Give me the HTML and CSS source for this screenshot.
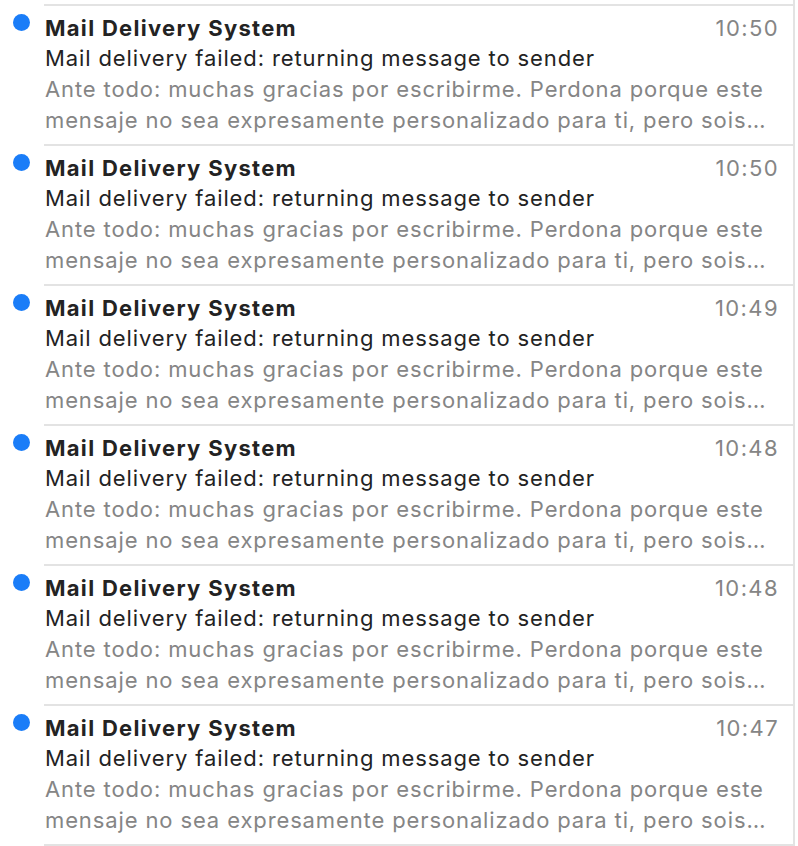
FILE: index.html
```html
<!DOCTYPE html>
<html lang="es">
<head>
<meta charset="utf-8">
<title>Mail</title>
<link rel="stylesheet" href="styles.css">
</head>
<body>
<div class="list">
  <div class="row">
    <div class="dot-col"><span class="dot"></span></div>
    <div class="content">
      <div class="head"><span class="sender">Mail Delivery System</span><span class="time">10:50</span></div>
      <div class="subject">Mail delivery failed: returning message to sender</div>
      <div class="preview">Ante todo: muchas gracias por escribirme. Perdona porque este mensaje no sea expresamente personalizado para ti, pero sois…</div>
    </div>
  </div>
  <div class="row">
    <div class="dot-col"><span class="dot"></span></div>
    <div class="content">
      <div class="head"><span class="sender">Mail Delivery System</span><span class="time">10:50</span></div>
      <div class="subject">Mail delivery failed: returning message to sender</div>
      <div class="preview">Ante todo: muchas gracias por escribirme. Perdona porque este mensaje no sea expresamente personalizado para ti, pero sois…</div>
    </div>
  </div>
  <div class="row">
    <div class="dot-col"><span class="dot"></span></div>
    <div class="content">
      <div class="head"><span class="sender">Mail Delivery System</span><span class="time">10:49</span></div>
      <div class="subject">Mail delivery failed: returning message to sender</div>
      <div class="preview">Ante todo: muchas gracias por escribirme. Perdona porque este mensaje no sea expresamente personalizado para ti, pero sois…</div>
    </div>
  </div>
  <div class="row">
    <div class="dot-col"><span class="dot"></span></div>
    <div class="content">
      <div class="head"><span class="sender">Mail Delivery System</span><span class="time">10:48</span></div>
      <div class="subject">Mail delivery failed: returning message to sender</div>
      <div class="preview">Ante todo: muchas gracias por escribirme. Perdona porque este mensaje no sea expresamente personalizado para ti, pero sois…</div>
    </div>
  </div>
  <div class="row">
    <div class="dot-col"><span class="dot"></span></div>
    <div class="content">
      <div class="head"><span class="sender">Mail Delivery System</span><span class="time">10:48</span></div>
      <div class="subject">Mail delivery failed: returning message to sender</div>
      <div class="preview">Ante todo: muchas gracias por escribirme. Perdona porque este mensaje no sea expresamente personalizado para ti, pero sois…</div>
    </div>
  </div>
  <div class="row">
    <div class="dot-col"><span class="dot"></span></div>
    <div class="content">
      <div class="head"><span class="sender">Mail Delivery System</span><span class="time">10:47</span></div>
      <div class="subject">Mail delivery failed: returning message to sender</div>
      <div class="preview">Ante todo: muchas gracias por escribirme. Perdona porque este mensaje no sea expresamente personalizado para ti, pero sois…</div>
    </div>
  </div>
</div>
</body>
</html>
```
FILE: styles.css
```css
html, body {
  margin: 0;
  padding: 0;
  background: #ffffff;
}
body {
  font-family: Inter, "Noto Sans", "Liberation Sans", sans-serif;
  font-size: 22px;
  line-height: 30px;
  color: #232323;
}
.list {
  width: 793px;
  padding-top: 4px;
  border-right: 2px solid #e3e3e3;
}
.row {
  display: flex;
}
.row:last-child .content {
  border-bottom: 2px solid #e3e3e3;
}
.dot-col {
  width: 44px;
  flex: none;
  display: flex;
  justify-content: center;
  padding-top: 10px;
  padding-right: 2px;
  box-sizing: border-box;
}
.dot {
  width: 17px;
  height: 17px;
  border-radius: 50%;
  background: #1a7df8;
}
.content {
  flex: 1;
  min-width: 0;
  border-top: 2px solid #e3e3e3;
  padding: 7px 14px 8px 1px;
  letter-spacing: 0.88px;
}
.head {
  display: flex;
  justify-content: space-between;
}
.sender {
  font-weight: 700;
  color: #232323;
  letter-spacing: 1.3px;
}
.time {
  color: #858585;
  letter-spacing: 1.4px;
}
.subject {
  color: #232323;
}
.preview {
  color: #858585;
  margin-top: 1px;
  line-height: 31px;
}
```
